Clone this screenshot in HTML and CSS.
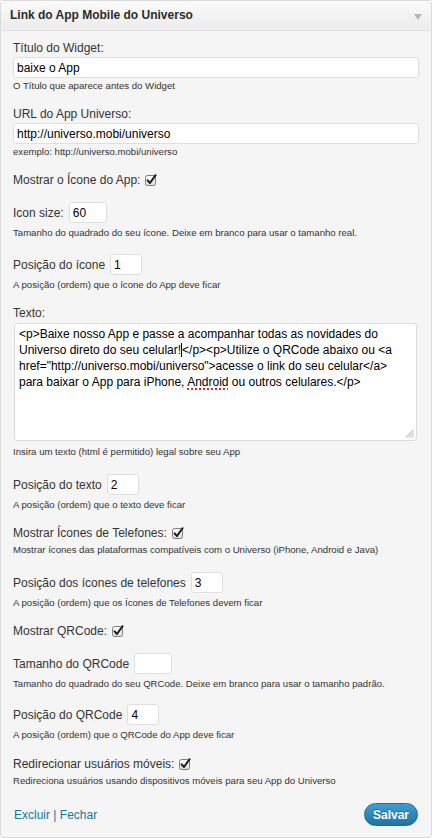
FILE: index.html
```html
<!DOCTYPE html>
<html lang="pt-BR">
<head>
<meta charset="utf-8">
<title>Link do App Mobile do Universo</title>
<link rel="stylesheet" href="styles.css">
</head>
<body>
<div class="widget">
  <div class="widget-top">
    <h3 class="widget-title">Link do App Mobile do Universo</h3>
    <span class="toggle"></span>
  </div>
  <div class="widget-inside">
    <div class="field first">
      <label class="lbl">Título do Widget:</label>
      <input class="input wide" type="text" value="baixe o App">
      <p class="desc">O Título que aparece antes do Widget</p>
    </div>

    <div class="field">
      <label class="lbl">URL do App Universo:</label>
      <input class="input wide" type="text" value="http://universo.mobi/universo">
      <p class="desc">exemplo: http://universo.mobi/universo</p>
    </div>

    <div class="field">
      <div class="check-row"><span class="lbl">Mostrar o Ícone do App:</span>
        <svg class="cb" width="12" height="12" viewBox="0 0 12 12"><defs><linearGradient id="g1" x1="0" y1="0" x2="0" y2="1"><stop offset="0" stop-color="#ffffff"/><stop offset="1" stop-color="#dcdcdc"/></linearGradient></defs><rect x="0.5" y="1.5" width="10" height="10" rx="2" fill="url(#g1)" stroke="#7d7d7d"/><path d="M2.6 6.4 L5 9 L10.6 1.2" fill="none" stroke="#1d1d1d" stroke-width="2" stroke-linecap="round" stroke-linejoin="round"/></svg>
      </div>
    </div>

    <div class="field">
      <div class="row"><span class="lbl">Icon size:</span><input class="input w38" type="text" value="60"></div>
      <p class="desc d-row">Tamanho do quadrado do seu ícone. Deixe em branco para usar o tamanho real.</p>
    </div>

    <div class="field m15">
      <div class="row"><span class="lbl">Posição do ícone</span><input class="input w32" type="text" value="1"></div>
      <p class="desc d-row">A posição (ordem) que o ícone do App deve ficar</p>
    </div>

    <div class="field">
      <label class="lbl">Texto:</label>
      <div class="textarea">&lt;p&gt;Baixe nosso App e passe a acompanhar todas as novidades do<br>Universo direto do seu celular!<span class="caret"></span>&lt;/p&gt;&lt;p&gt;Utilize o QRCode abaixo ou &lt;a<br>href="http://universo.mobi/universo"&gt;acesse o link do seu celular&lt;/a&gt;<br>para baixar o App para iPhone, <span class="spell">Android</span> ou outros celulares.&lt;/p&gt;
        <svg class="grip" width="9" height="9" viewBox="0 0 9 9"><path d="M8.5 1 L1 8.5 M8.5 4 L4 8.5 M8.5 7 L7 8.5" stroke="#9a9a9a" stroke-width="1" fill="none"/></svg>
      </div>
      <p class="desc d-area">Insira um texto (html é permitido) legal sobre seu App</p>
    </div>

    <div class="field m16">
      <div class="row"><span class="lbl">Posição do texto</span><input class="input w32" type="text" value="2"></div>
      <p class="desc d-row">A posição (ordem) que o texto deve ficar</p>
    </div>

    <div class="field">
      <div class="check-row"><span class="lbl">Mostrar Ícones de Telefones:</span>
        <svg class="cb" width="12" height="12" viewBox="0 0 12 12"><rect x="0.5" y="1.5" width="10" height="10" rx="2" fill="url(#g1)" stroke="#7d7d7d"/><path d="M2.6 6.4 L5 9 L10.6 1.2" fill="none" stroke="#1d1d1d" stroke-width="2" stroke-linecap="round" stroke-linejoin="round"/></svg>
      </div>
      <p class="desc d-check">Mostrar ícones das plataformas compatíveis com o Universo (iPhone, Android e Java)</p>
    </div>

    <div class="field m16">
      <div class="row"><span class="lbl">Posição dos ícones de telefones</span><input class="input w32" type="text" value="3"></div>
      <p class="desc d-row">A posição (ordem) que os Ícones de Telefones devem ficar</p>
    </div>

    <div class="field">
      <div class="check-row"><span class="lbl">Mostrar QRCode:</span>
        <svg class="cb" width="12" height="12" viewBox="0 0 12 12"><rect x="0.5" y="1.5" width="10" height="10" rx="2" fill="url(#g1)" stroke="#7d7d7d"/><path d="M2.6 6.4 L5 9 L10.6 1.2" fill="none" stroke="#1d1d1d" stroke-width="2" stroke-linecap="round" stroke-linejoin="round"/></svg>
      </div>
    </div>

    <div class="field">
      <div class="row"><span class="lbl">Tamanho do QRCode</span><input class="input w38" type="text" value=""></div>
      <p class="desc d-row">Tamanho do quadrado do seu QRCode. Deixe em branco para usar o tamanho padrão.</p>
    </div>

    <div class="field">
      <div class="row"><span class="lbl">Posição do QRCode</span><input class="input w32" type="text" value="4"></div>
      <p class="desc d-row">A posição (ordem) que o QRCode do App deve ficar</p>
    </div>

    <div class="field m15">
      <div class="check-row"><span class="lbl">Redirecionar usuários móveis:</span>
        <svg class="cb" width="12" height="12" viewBox="0 0 12 12"><rect x="0.5" y="1.5" width="10" height="10" rx="2" fill="url(#g1)" stroke="#7d7d7d"/><path d="M2.6 6.4 L5 9 L10.6 1.2" fill="none" stroke="#1d1d1d" stroke-width="2" stroke-linecap="round" stroke-linejoin="round"/></svg>
      </div>
      <p class="desc d-check">Redireciona usuários usando dispositivos móveis para seu App do Universo</p>
    </div>

    <div class="footer">
      <div class="links"><a href="#" class="link">Excluir</a> | <a href="#" class="link">Fechar</a></div>
      <button class="save" type="button">Salvar</button>
    </div>
  </div>
</div>
</body>
</html>
```

FILE: styles.css
```css
* { box-sizing: border-box; }

html, body {
  margin: 0;
  padding: 0;
  background: #ffffff;
}

body {
  font-family: "Liberation Sans", Arial, Helvetica, sans-serif;
  color: #333333;
}

.widget {
  width: 432px;
  border: 1px solid #dcdcdc;
  border-radius: 3px;
  background: #f5f5f5;
  overflow: hidden;
}

.widget-top {
  height: 30px;
  display: flex;
  align-items: center;
  justify-content: space-between;
  padding: 0 9px 0 9px;
  background: linear-gradient(to bottom, #fafafa, #ececec);
  border-bottom: 1px solid #dfdfdf;
}

.widget-title {
  margin: 0;
  font-size: 12px;
  font-weight: bold;
  color: #2b2b2b;
  line-height: 16px;
  margin-top: -1px;
}

.toggle {
  width: 0;
  height: 0;
  border-left: 4px solid transparent;
  border-right: 4px solid transparent;
  border-top: 6px solid #b5b5b5;
  margin-top: 2px;
}

.widget-inside {
  padding: 9px 12px 11px 12px;
  display: flex;
  flex-direction: column;
}

.field {
  margin-top: 14px;
  display: flex;
  flex-direction: column;
  align-items: flex-start;
}
.field.first { margin-top: 0; }
.field.m15 { margin-top: 15px; }
.field.m16 { margin-top: 16px; }

.lbl {
  font-size: 12px;
  line-height: 16px;
  color: #333333;
  white-space: nowrap;
}

.input {
  height: 21px;
  border: 1px solid #dfdfdf;
  border-radius: 3px;
  background: #ffffff;
  font-family: "Liberation Sans", Arial, Helvetica, sans-serif;
  font-size: 12px;
  color: #000000;
  padding: 0 3px;
  margin: 0;
  outline: none;
}
.input.wide {
  width: 406px;
  margin-top: 1px;
}
.w38 { width: 38px; }
.w32 { width: 32px; }

.row {
  display: flex;
  align-items: center;
  gap: 5px;
  height: 21px;
}

.check-row {
  display: flex;
  align-items: center;
  gap: 5px;
  height: 16px;
}
.cb { display: block; margin-top: -1px; }

.desc {
  margin: 2px 0 0 0;
  font-size: 9.6px;
  line-height: 12px;
  color: #333333;
  white-space: nowrap;
}
.desc.d-row { margin-top: 4px; }
.desc.d-check { margin-top: 3px; }
.desc.d-area { margin-top: 5px; }

.textarea {
  position: relative;
  width: 403px;
  height: 118px;
  margin: 2px 0 0 1px;
  border: 1px solid #dcdcdc;
  border-radius: 3px;
  background: #ffffff;
  padding: 2px 4px;
  font-size: 12px;
  line-height: 16px;
  color: #000000;
  white-space: nowrap;
}

.caret {
  display: inline-block;
  width: 0;
  height: 14px;
  border-left: 1px solid #000000;
  vertical-align: -3px;
}

.spell {
  text-decoration: underline dotted #e0262c;
  text-decoration-thickness: 2px;
  text-underline-offset: 2px;
}

.grip {
  position: absolute;
  right: 2px;
  bottom: 2px;
}

.footer {
  margin-top: 16px;
  height: 23px;
  display: flex;
  align-items: center;
  justify-content: space-between;
}

.links {
  font-size: 12px;
  color: #21759b;
  padding-left: 1px;
}
.link {
  color: #21759b;
  text-decoration: none;
}

.save {
  width: 54px;
  height: 23px;
  margin-right: 1px;
  border: 1px solid #1f6d94;
  border-radius: 12px;
  background: linear-gradient(to bottom, #3ca0d3, #2073a0);
  color: #ffffff;
  font-family: "Liberation Sans", Arial, Helvetica, sans-serif;
  font-size: 12px;
  font-weight: bold;
  text-shadow: 0 -1px 0 rgba(0,0,0,0.3);
  padding: 0;
  cursor: pointer;
}
```
